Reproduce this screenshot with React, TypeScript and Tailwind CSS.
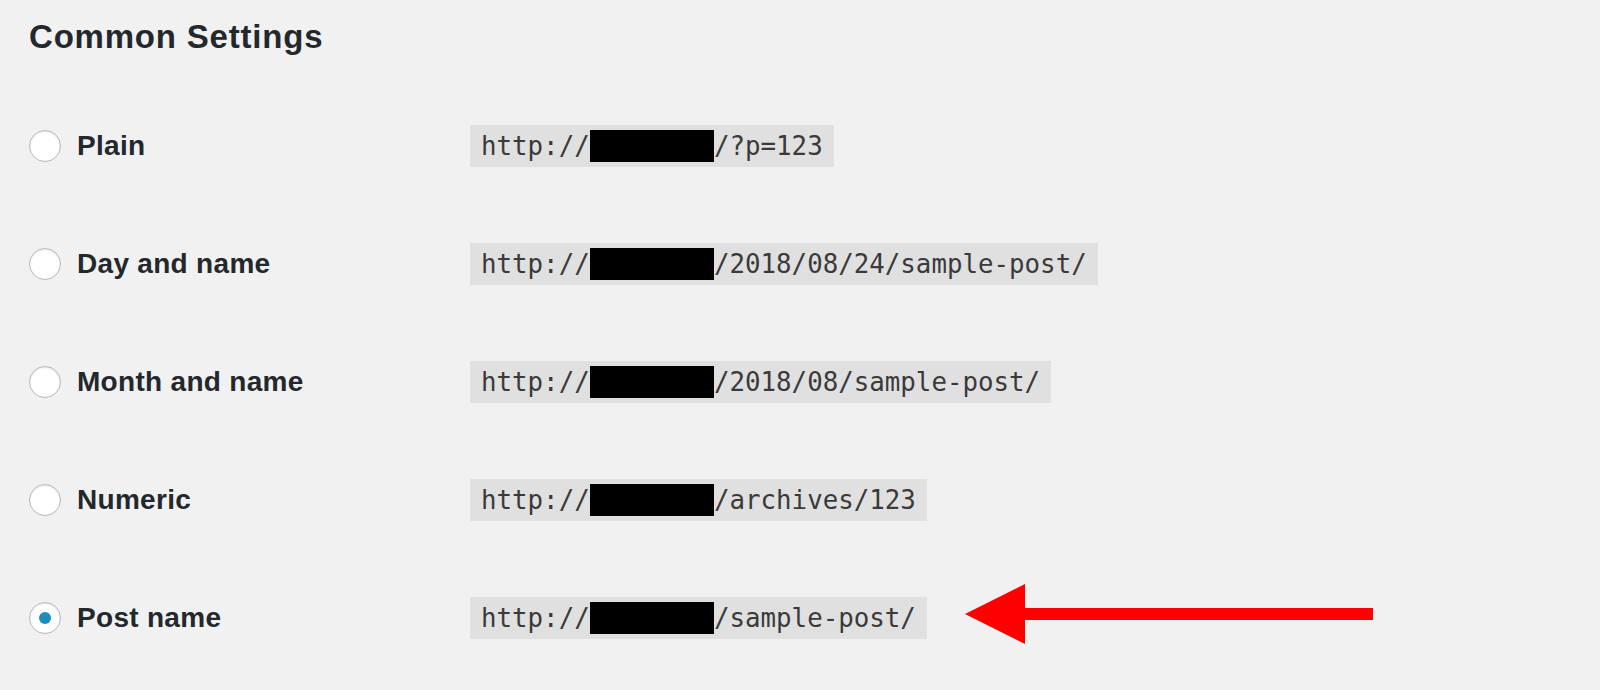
const rows = [
  { label: "Plain", tail: "/?p=123", checked: false },
  { label: "Day and name", tail: "/2018/08/24/sample-post/", checked: false },
  { label: "Month and name", tail: "/2018/08/sample-post/", checked: false },
  { label: "Numeric", tail: "/archives/123", checked: false },
  { label: "Post name", tail: "/sample-post/", checked: true },
];

function Radio({ checked }: { checked: boolean }) {
  return (
    <span className="flex h-8 w-8 shrink-0 items-center justify-center rounded-full border-[1.5px] border-[#b4b9be] bg-white shadow-[inset_0_1px_2px_rgba(0,0,0,0.1)]">
      {checked && <span className="h-3 w-3 rounded-full bg-[#1e8cbe]" />}
    </span>
  );
}

function Permalink({ tail }: { tail: string }) {
  return (
    <code className="inline-flex items-center bg-[#e0e0e0] px-[11px] py-[5px] font-['DejaVu_Sans_Mono',monospace] text-[25.8px] leading-[32px] text-[#3a3a3a]">
      <span>http://</span>
      <span className="inline-block h-[32px] w-[8ch] bg-black" />
      <span>{tail}</span>
    </code>
  );
}

export default function App() {
  return (
    <div className="min-h-screen bg-[#f1f1f1] pt-[20px] pl-[29px] font-['Liberation_Sans',Arial,sans-serif] text-[#23282d]">
      <h2 className="text-[33px] leading-[33px] font-bold tracking-[0.8px]">Common Settings</h2>

      <div className="mt-[72px] flex flex-col gap-[76px]">
        {rows.map((row) => (
          <div key={row.label} className="relative flex h-[42px] items-center">
            <div className="flex w-[441px] items-center gap-[16px]">
              <Radio checked={row.checked} />
              <span className="text-[28px] font-bold tracking-[0.3px]">{row.label}</span>
            </div>
            <Permalink tail={row.tail} />
            {row.checked && (
              <svg
                className="absolute top-[-13px] left-[936px]"
                width="410"
                height="62"
                viewBox="0 0 410 62"
              >
                <polygon points="0,30 60,0 60,60" fill="#ff0000" />
                <rect x="58" y="24" width="350" height="12" fill="#ff0000" />
              </svg>
            )}
          </div>
        ))}
      </div>
    </div>
  );
}
